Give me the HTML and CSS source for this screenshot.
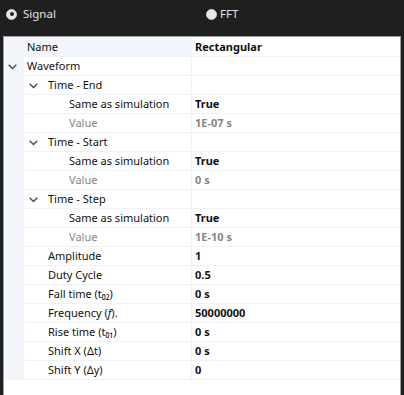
FILE: index.html
```html
<!DOCTYPE html>
<html lang="en">
<head>
  <meta charset="UTF-8" />
  <title>Signal Properties</title>
  <link rel="stylesheet" href="styles.css">
</head>
<body>
  <div class="mode-bar">
    <label class="radio checked"><span class="dot"></span>Signal</label>
    <label class="radio fft"><span class="dot"></span>FFT</label>
  </div>

  <div class="grid">
    <div class="row head">
      <div class="gutter"></div>
      <div class="name lvl0">Name</div>
      <div class="value">Rectangular</div>
    </div>
    <div class="row">
      <div class="gutter"><svg class="chev" width="9" height="6" viewBox="0 0 9 6"><polyline points="0.7,0.7 4.5,4.5 8.3,0.7"/></svg></div>
      <div class="name lvl0">Waveform</div>
      <div class="value"></div>
    </div>
    <div class="row">
      <div class="gutter"></div>
      <div class="name lvl1"><svg class="chev" width="9" height="6" viewBox="0 0 9 6"><polyline points="0.7,0.7 4.5,4.5 8.3,0.7"/></svg>Time - End</div>
      <div class="value"></div>
    </div>
    <div class="row">
      <div class="gutter"></div>
      <div class="name lvl2">Same as simulation</div>
      <div class="value">True</div>
    </div>
    <div class="row off">
      <div class="gutter"></div>
      <div class="name lvl2">Value</div>
      <div class="value">1E-07 s</div>
    </div>
    <div class="row">
      <div class="gutter"></div>
      <div class="name lvl1"><svg class="chev" width="9" height="6" viewBox="0 0 9 6"><polyline points="0.7,0.7 4.5,4.5 8.3,0.7"/></svg>Time - Start</div>
      <div class="value"></div>
    </div>
    <div class="row">
      <div class="gutter"></div>
      <div class="name lvl2">Same as simulation</div>
      <div class="value">True</div>
    </div>
    <div class="row off">
      <div class="gutter"></div>
      <div class="name lvl2">Value</div>
      <div class="value">0 s</div>
    </div>
    <div class="row">
      <div class="gutter"></div>
      <div class="name lvl1"><svg class="chev" width="9" height="6" viewBox="0 0 9 6"><polyline points="0.7,0.7 4.5,4.5 8.3,0.7"/></svg>Time - Step</div>
      <div class="value"></div>
    </div>
    <div class="row">
      <div class="gutter"></div>
      <div class="name lvl2">Same as simulation</div>
      <div class="value">True</div>
    </div>
    <div class="row off">
      <div class="gutter"></div>
      <div class="name lvl2">Value</div>
      <div class="value">1E-10 s</div>
    </div>
    <div class="row">
      <div class="gutter"></div>
      <div class="name lvl1">Amplitude</div>
      <div class="value">1</div>
    </div>
    <div class="row">
      <div class="gutter"></div>
      <div class="name lvl1">Duty Cycle</div>
      <div class="value">0.5</div>
    </div>
    <div class="row">
      <div class="gutter"></div>
      <div class="name lvl1">Fall time (t₀₂)</div>
      <div class="value">0 s</div>
    </div>
    <div class="row">
      <div class="gutter"></div>
      <div class="name lvl1">Frequency (<i>f</i>).</div>
      <div class="value">50000000</div>
    </div>
    <div class="row">
      <div class="gutter"></div>
      <div class="name lvl1">Rise time (t₀₁)</div>
      <div class="value">0 s</div>
    </div>
    <div class="row">
      <div class="gutter"></div>
      <div class="name lvl1">Shift X (Δt)</div>
      <div class="value">0 s</div>
    </div>
    <div class="row">
      <div class="gutter"></div>
      <div class="name lvl1">Shift Y (Δy)</div>
      <div class="value">0</div>
    </div>
  </div>
</body>
</html>
```

FILE: styles.css
```css
body {
  margin: 0;
  background: #1f1f1f;
  font-family: "Noto Sans", sans-serif;
  font-size: 11px;
  height: 395px;
  overflow: hidden;
}
.mode-bar {
  height: 36px;
  color: #e2e2e2;
  font-size: 11.5px;
  position: relative;
}
.radio {
  display: flex;
  align-items: center;
  gap: 6px;
  position: absolute;
  top: 7px;
  line-height: 14px;
}
.radio:first-child {
  left: 6px;
}
.radio.fft {
  left: 206px;
  gap: 3px;
}
.dot {
  width: 11px;
  height: 11px;
  border-radius: 50%;
  background: #e8e8e8;
  box-sizing: border-box;
  border: 1px solid #cfcfcf;
  position: relative;
}
.checked .dot::after {
  content: "";
  position: absolute;
  left: 2.5px;
  top: 2.5px;
  width: 4px;
  height: 4px;
  border-radius: 50%;
  background: #222;
}
.grid {
  box-sizing: border-box;
  margin: 0 3px;
  background: #fff;
  border: 1px solid #a0a0a0;
  border-bottom: none;
  height: 359px;
  overflow: hidden;
}
.row {
  display: grid;
  grid-template-columns: 20px 168px 1fr;
  height: 19px;
}
.gutter {
  background: #f2f5fa;
  position: relative;
}
.name, .value {
  border-bottom: 1px solid #eef1f6;
  line-height: 19px;
  white-space: nowrap;
  color: #111;
}
.name {
  border-right: 1px solid #eef1f6;
  position: relative;
}
.value {
  padding-left: 3px;
  font-weight: bold;
}
.head .name {
  background: #f2f5fa;
}
.lvl0 { padding-left: 3px; }
.lvl1 { padding-left: 24px; }
.lvl2 { padding-left: 45px; }
.off .name, .off .value {
  color: #858585;
}
.chev {
  position: absolute;
  top: 8px;
  left: 4px;
  fill: none;
  stroke: #4a4a4a;
  stroke-width: 1.4;
}
.name .chev {
  left: 5px;
}
```
